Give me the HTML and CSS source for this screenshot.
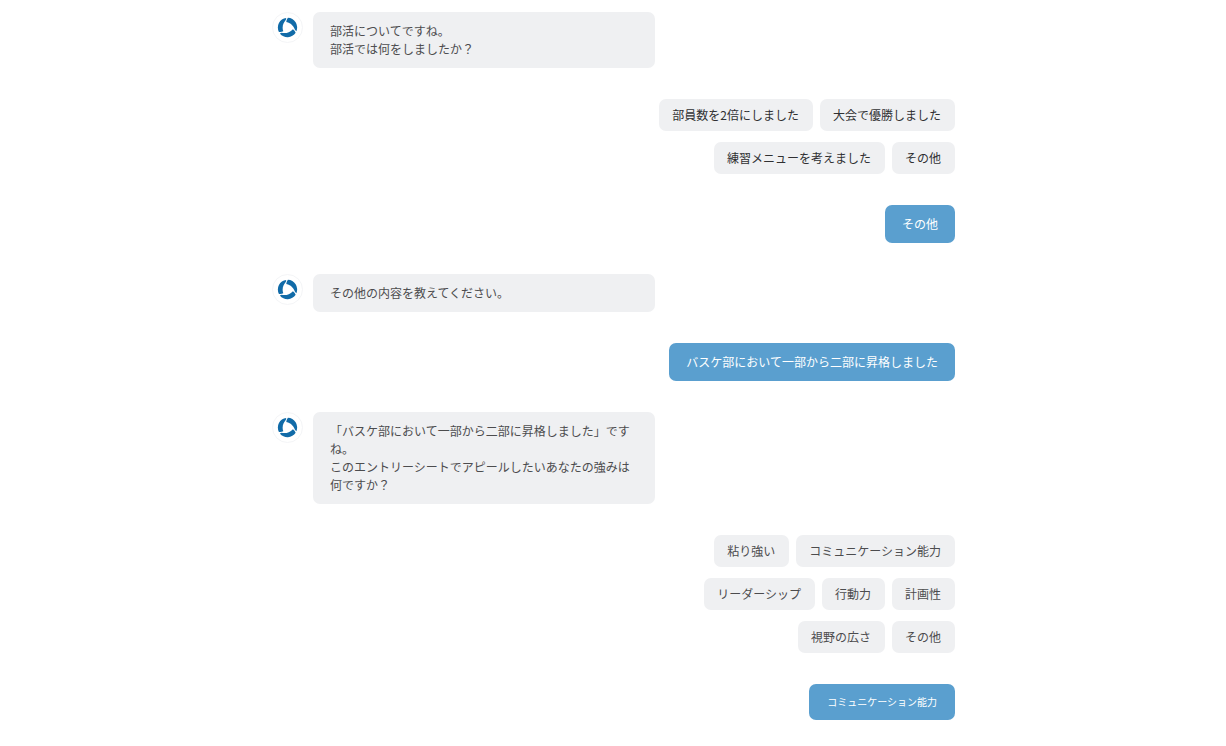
FILE: index.html
```html
<!doctype html>
<html lang="ja">
  <head>
    <meta charset="utf-8" />
    <title>エントリーシート作成チャット</title>
    <meta name="viewport" content="width=device-width, initial-scale=1.0" />
    <link rel="stylesheet" href="styles.css">
  </head>
  <body>
    <svg class="sprite" aria-hidden="true">
      <defs>
        <path id="blade" d="M.4-9.2A9.2 9.2 0 0 1 8.5 3.5L7.2 2.4C6-.8 3.8-4.4-1.2-5.3Q-1-7.4.4-9.2Z" />
        <symbol id="logo" viewBox="-10 -10 20 20">
          <use href="#blade" />
          <use href="#blade" transform="rotate(120)" />
          <use href="#blade" transform="rotate(240)" />
        </symbol>
      </defs>
    </svg>
    <main class="chat">
      <div class="message">
        <span class="avatar"><svg class="logo"><use href="#logo" /></svg></span>
        <p class="bubble">部活についてですね。<br>部活では何をしましたか？</p>
      </div>

      <div class="options options-strong">
        <button type="button" class="option">部員数を2倍にしました</button>
        <button type="button" class="option">大会で優勝しました</button>
        <button type="button" class="option">練習メニューを考えました</button>
        <button type="button" class="option">その他</button>
      </div>

      <p class="reply">その他</p>

      <div class="message">
        <span class="avatar"><svg class="logo"><use href="#logo" /></svg></span>
        <p class="bubble">その他の内容を教えてください。</p>
      </div>

      <p class="reply">バスケ部において一部から二部に昇格しました</p>

      <div class="message">
        <span class="avatar"><svg class="logo"><use href="#logo" /></svg></span>
        <p class="bubble">「バスケ部において一部から二部に昇格しました」ですね。<br>このエントリーシートでアピールしたいあなたの強みは何ですか？</p>
      </div>

      <div class="options">
        <button type="button" class="option">粘り強い</button>
        <button type="button" class="option">コミュニケーション能力</button>
        <button type="button" class="option">リーダーシップ</button>
        <button type="button" class="option">行動力</button>
        <button type="button" class="option">計画性</button>
        <button type="button" class="option">視野の広さ</button>
        <button type="button" class="option">その他</button>
      </div>

      <p class="reply reply-small">コミュニケーション能力</p>
    </main>
  </body>
</html>
```

FILE: styles.css
```css
:root {
  --color-bg: #ffffff;
  --color-text: #4c4c4e;
  --color-text-strong: #303032;
  --color-bubble: #eff0f2;
  --color-reply: #5a9fcf;
  --color-logo: #116ba8;
}
* {
  margin: 0;
  padding: 0;
  box-sizing: border-box;
}
body {
  background: var(--color-bg);
  color: var(--color-text);
  font-family: "Noto Sans CJK JP", sans-serif;
  font-size: 12px;
  line-height: 18px;
}
.sprite {
  position: absolute;
  width: 0;
  height: 0;
}
.chat {
  max-width: 684px;
  margin: 0 auto;
  padding: 12px 0;
  display: flex;
  flex-direction: column;
  gap: 31px;
}
.message {
  display: flex;
  align-items: flex-start;
  gap: 10px;
  padding-left: 1px;
}
.avatar {
  flex: none;
  display: flex;
  align-items: center;
  justify-content: center;
  width: 31px;
  height: 31px;
  border: 1px solid #f4f5f7;
  border-radius: 50%;
}
.logo {
  width: 21px;
  height: 21px;
  fill: var(--color-logo);
}
.bubble {
  width: 50%;
  padding: 10px 17px;
  background: var(--color-bubble);
  border-radius: 7px;
}
.options {
  align-self: flex-end;
  max-width: 50%;
  display: flex;
  flex-wrap: wrap;
  justify-content: flex-end;
  gap: 11px 7px;
}
.option {
  padding: 7px 14px 7px 13px;
  border: 0;
  border-radius: 7px;
  background: var(--color-bubble);
  color: inherit;
  font: inherit;
  cursor: pointer;
}
.option:hover {
  background: #e4e6e9;
}
.options-strong {
  color: var(--color-text-strong);
}
.reply {
  align-self: flex-end;
  padding: 10px 17px;
  border-radius: 7px;
  background: var(--color-reply);
  color: #ffffff;
}
.reply-small {
  padding: 10px 18px;
  font-size: 10px;
  line-height: 16px;
}
```
